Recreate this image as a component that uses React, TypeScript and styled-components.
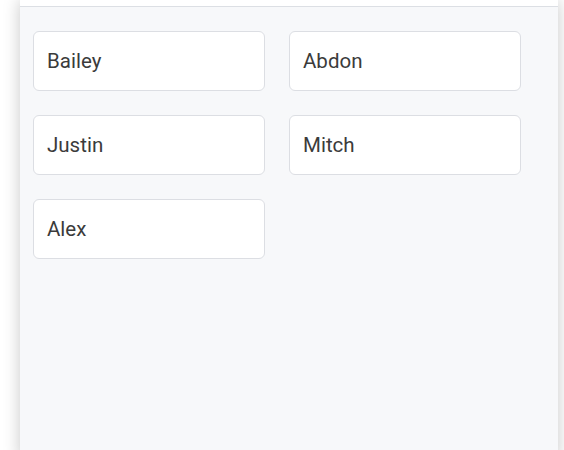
import React from "react";
import styled, { createGlobalStyle } from "styled-components";

const Global = createGlobalStyle`
  html, body { margin: 0; padding: 0; background: #ffffff; }
  body { font-family: Roboto, "Noto Sans", sans-serif; overflow: hidden; }
`;

const Panel = styled.div`
  margin-left: 20px;
  width: 538px;
  height: 460px;
  background: #f7f8fa;
  box-shadow: 0 0 16px rgba(0, 0, 0, 0.22);
  display: flex;
  flex-direction: column;
`;

const Header = styled.div`
  height: 6px;
  background: #ffffff;
  border-bottom: 1px solid #dcdfe4;
`;

const Grid = styled.div`
  display: grid;
  grid-template-columns: 232px 232px;
  grid-auto-rows: 60px;
  gap: 24px;
  padding: 24px 13px;
`;

const Card = styled.div`
  box-sizing: border-box;
  background: #ffffff;
  border: 1px solid #dcdee3;
  border-radius: 6px;
  display: flex;
  align-items: center;
  padding: 0 13px;
  font-size: 20.5px;
  color: #3b3b3b;
`;

const names = ["Bailey", "Abdon", "Justin", "Mitch", "Alex"];

export default function App() {
  return (
    <>
      <Global />
      <Panel>
        <Header />
        <Grid>
          {names.map((n) => (
            <Card key={n}>{n}</Card>
          ))}
        </Grid>
      </Panel>
    </>
  );
}
